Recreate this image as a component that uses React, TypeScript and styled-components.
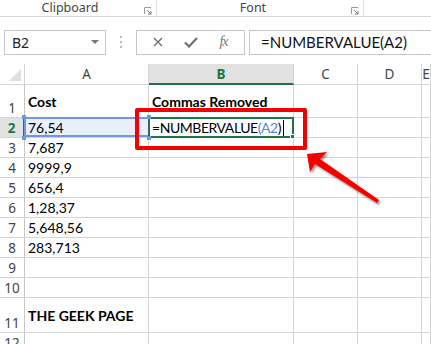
import React from 'react';
import styled, { createGlobalStyle } from 'styled-components';

const GlobalStyle = createGlobalStyle`
    html, body {
        margin: 0;
        padding: 0;
        background: #ffffff;
        overflow: hidden;
    }
`;

const Page = styled.div`
    position: relative;
    width: 431px;
    height: 344px;
    overflow: hidden;
    font-family: "Noto Sans", "Open Sans", sans-serif;
`;

const Ribbon = styled.div`
    display: flex;
    height: 16px;
    border-bottom: 1px solid #d5d5d5;
`;

const Group = styled.div<{ $w: number }>`
    position: relative;
    width: ${p => p.$w}px;
    display: flex;
    justify-content: center;
    border-right: 1px solid #e1e1e1;
    box-sizing: border-box;
`;

const GroupLabel = styled.span<{ $shift: number }>`
    font-size: 12.5px;
    line-height: 16px;
    color: #444;
    margin-left: ${p => p.$shift}px;
`;

const Launcher = styled.svg`
    position: absolute;
    right: 4px;
    top: 7px;
`;

const FormulaBar = styled.div`
    display: flex;
    align-items: center;
    height: 46px;
    padding: 0 0 0 4px;
    box-sizing: border-box;
    padding-top: 4px;
`;

const NameBox = styled.div`
    width: 102px;
    height: 25px;
    box-sizing: border-box;
    border: 1px solid #c6c6c6;
    display: flex;
    align-items: center;
    justify-content: space-between;
    padding: 0 6px 0 7px;
    font-size: 14px;
    color: #222;
`;

const DropArrow = styled.span`
    width: 0;
    height: 0;
    border-left: 4px solid transparent;
    border-right: 4px solid transparent;
    border-top: 4px solid #777;
`;

const Grip = styled.div`
    width: 30px;
    display: flex;
    flex-direction: column;
    align-items: center;
    gap: 3px;
`;

const GripDot = styled.span`
    width: 2px;
    height: 2px;
    background: #b9b9b9;
`;

const ButtonBox = styled.div`
    width: 109px;
    height: 25px;
    box-sizing: border-box;
    border: 1px solid #c6c6c6;
    display: flex;
    align-items: center;
    justify-content: space-around;
    padding: 0 6px;
`;

const Fx = styled.span`
    font-family: "Liberation Serif", serif;
    font-style: italic;
    font-size: 14px;
    color: #777;
    letter-spacing: -1px;
`;

const FormulaInput = styled.div`
    flex: 1;
    margin-left: 4px;
    height: 25px;
    box-sizing: border-box;
    border: 1px solid #c6c6c6;
    border-right: none;
    display: flex;
    align-items: center;
    padding-left: 11px;
    font-family: Lato, "Liberation Sans", sans-serif;
    font-size: 15px;
    color: #111;
`;

const Sheet = styled.div`
    display: flex;
    flex-direction: column;
    margin-top: 1px;
    font-family: Lato, "Liberation Sans", sans-serif;
`;

const Row = styled.div<{ $h: number }>`
    display: flex;
    height: ${p => p.$h}px;
`;

const Corner = styled.div`
    position: relative;
    width: 25px;
    box-sizing: border-box;
    border-right: 1px solid #d4d4d4;
    border-bottom: 1px solid #d4d4d4;
    &::after {
        content: '';
        position: absolute;
        right: 3px;
        bottom: 3px;
        border-left: 12px solid transparent;
        border-bottom: 12px solid #dfdfdf;
    }
`;

const ColHead = styled.div<{ $w: number; $active?: boolean }>`
    width: ${p => p.$w}px;
    flex: ${p => (p.$w ? 'none' : '1')};
    box-sizing: border-box;
    border-right: 1px solid #d4d4d4;
    border-bottom: ${p => (p.$active ? '2px solid #217346' : '1px solid #d4d4d4')};
    background: ${p => (p.$active ? '#e1e1e1' : '#fff')};
    color: ${p => (p.$active ? '#217346' : '#444')};
    font-weight: ${p => (p.$active ? 700 : 400)};
    font-family: "Noto Sans", sans-serif;
    font-size: 13.5px;
    display: flex;
    align-items: center;
    justify-content: center;
`;

const RowHead = styled.div<{ $active?: boolean }>`
    width: 25px;
    box-sizing: border-box;
    border-right: ${p => (p.$active ? '2px solid #217346' : '1px solid #c6c6c6')};
    border-bottom: 1px solid #d4d4d4;
    background: ${p => (p.$active ? '#e1e1e1' : '#fff')};
    color: ${p => (p.$active ? '#217346' : '#444')};
    font-weight: ${p => (p.$active ? 700 : 400)};
    font-family: "Noto Sans", sans-serif;
    font-size: 13.5px;
    display: flex;
    align-items: flex-end;
    justify-content: center;
    line-height: 18px;
`;

const Cell = styled.div<{ $w: number; $bold?: boolean }>`
    position: relative;
    width: ${p => p.$w}px;
    flex: ${p => (p.$w ? 'none' : '1')};
    box-sizing: border-box;
    border-right: 1px solid #d4d4d4;
    border-bottom: 1px solid #d4d4d4;
    display: flex;
    align-items: center;
    padding: 0 3px;
    font-size: 14px;
    font-weight: ${p => (p.$bold ? 700 : 400)};
    color: #000;
    white-space: nowrap;
`;

const RefCell = styled(Cell)`
    background: #e9effa;
    &::after {
        content: '';
        position: absolute;
        inset: -1px -2px 0 -1px;
        border: 2px solid #6e98e6;
    }
`;

const Handle = styled.span<{ $x: 'left' | 'right'; $y: 'top' | 'bottom' }>`
    position: absolute;
    ${p => p.$x}: -3px;
    ${p => p.$y}: -3px;
    width: 4px;
    height: 4px;
    background: #6e98e6;
    z-index: 2;
`;

const ActiveCell = styled(Cell)`
    overflow: visible;
    &::after {
        content: '';
        position: absolute;
        inset: -1px -1px -1px -1px;
        border: 2px solid #217346;
    }
    &::before {
        content: '';
        position: absolute;
        right: -2px;
        bottom: -2px;
        width: 5px;
        height: 5px;
        background: #217346;
        border: 1px solid #fff;
        box-sizing: border-box;
        z-index: 2;
    }
`;

const FormulaText = styled.span`
    letter-spacing: -0.45px;
`;

const RefText = styled.span`
    color: #4f86e3;
`;

const Caret = styled.span`
    display: inline-block;
    width: 1px;
    height: 16px;
    background: #000;
    margin-left: 2px;
    vertical-align: -3px;
`;

const Highlight = styled.div`
    position: absolute;
    left: 135px;
    top: 108px;
    width: 172px;
    height: 42px;
    box-sizing: border-box;
    border: 4px solid #f40000;
    border-radius: 2px;
`;

const Overlay = styled.svg`
    position: absolute;
    left: 0;
    top: 0;
    pointer-events: none;
`;

const cols = [124, 145, 64, 64, 0];
const headers = ['A', 'B', 'C', 'D', 'E'];

type RowData = { n: number; h: number; a?: string; b?: string; bold?: boolean };

const rows: RowData[] = [
    { n: 1, h: 33, a: 'Cost', b: 'Commas Removed', bold: true },
    { n: 2, h: 20 },
    { n: 3, h: 20, a: '7,687' },
    { n: 4, h: 20, a: '9999,9' },
    { n: 5, h: 20, a: '656,4' },
    { n: 6, h: 20, a: '1,28,37' },
    { n: 7, h: 20, a: '5,648,56' },
    { n: 8, h: 20, a: '283,713' },
    { n: 9, h: 20 },
    { n: 10, h: 20 },
    { n: 11, h: 35, a: 'THE GEEK PAGE', bold: true },
    { n: 12, h: 20 },
];

function LauncherIcon() {
    return (
        <Launcher width="8" height="8" viewBox="0 0 8 8">
            <path d="M0.5 7V0.5H7" stroke="#9a9a9a" fill="none" />
            <path d="M3 3L7 7M4 7H7V4" stroke="#7a7a7a" fill="none" />
        </Launcher>
    );
}

export default function App() {
    return (
        <Page>
            <GlobalStyle />
            <Ribbon>
                <Group $w={157}>
                    <GroupLabel $shift={-16}>Clipboard</GroupLabel>
                    <LauncherIcon />
                </Group>
                <Group $w={207}>
                    <GroupLabel $shift={-14}>Font</GroupLabel>
                    <LauncherIcon />
                </Group>
            </Ribbon>
            <FormulaBar>
                <NameBox>
                    B2
                    <DropArrow />
                </NameBox>
                <Grip>
                    <GripDot />
                    <GripDot />
                    <GripDot />
                </Grip>
                <ButtonBox>
                    <svg width="10" height="10" viewBox="0 0 10 10">
                        <path d="M1 1L9 9M9 1L1 9" stroke="#6f6f6f" strokeWidth="1.4" />
                    </svg>
                    <svg width="14" height="11" viewBox="0 0 14 11">
                        <path d="M1 5.5L5 9.5L13 1" stroke="#6f6f6f" strokeWidth="2.2" fill="none" />
                    </svg>
                    <Fx>fx</Fx>
                </ButtonBox>
                <FormulaInput>=NUMBERVALUE(A2)</FormulaInput>
            </FormulaBar>
            <Sheet>
                <Row $h={21}>
                    <Corner />
                    {headers.map((h, i) => (
                        <ColHead key={h} $w={cols[i]} $active={h === 'B'}>
                            {h}
                        </ColHead>
                    ))}
                </Row>
                {rows.map(r => (
                    <Row key={r.n} $h={r.h}>
                        <RowHead $active={r.n === 2}>{r.n}</RowHead>
                        {r.n === 2 ? (
                            <>
                                <RefCell $w={cols[0]}>
                                    76,54
                                    <Handle $x="left" $y="top" />
                                    <Handle $x="right" $y="top" />
                                    <Handle $x="left" $y="bottom" />
                                    <Handle $x="right" $y="bottom" />
                                </RefCell>
                                <ActiveCell $w={cols[1]}>
                                    <FormulaText>
                                        =NUMBERVALUE<RefText>(A2</RefText>)<Caret />
                                    </FormulaText>
                                </ActiveCell>
                            </>
                        ) : (
                            <>
                                <Cell $w={cols[0]} $bold={r.bold}>{r.a}</Cell>
                                <Cell $w={cols[1]} $bold={r.bold}>{r.b}</Cell>
                            </>
                        )}
                        <Cell $w={cols[2]} />
                        <Cell $w={cols[3]} />
                        <Cell $w={cols[4]} />
                    </Row>
                ))}
            </Sheet>
            <Highlight />
            <Overlay width="431" height="344" viewBox="0 0 431 344">
                <defs>
                    <filter id="shade" x="-20%" y="-20%" width="140%" height="140%">
                        <feDropShadow dx="1.5" dy="2" stdDeviation="1.2" floodColor="#000" floodOpacity="0.45" />
                    </filter>
                </defs>
                <polygon
                    points="307,154 327,152 320,159 379,200 377,203 315,164 310,172"
                    fill="#f40000"
                    filter="url(#shade)"
                />
            </Overlay>
        </Page>
    );
}
